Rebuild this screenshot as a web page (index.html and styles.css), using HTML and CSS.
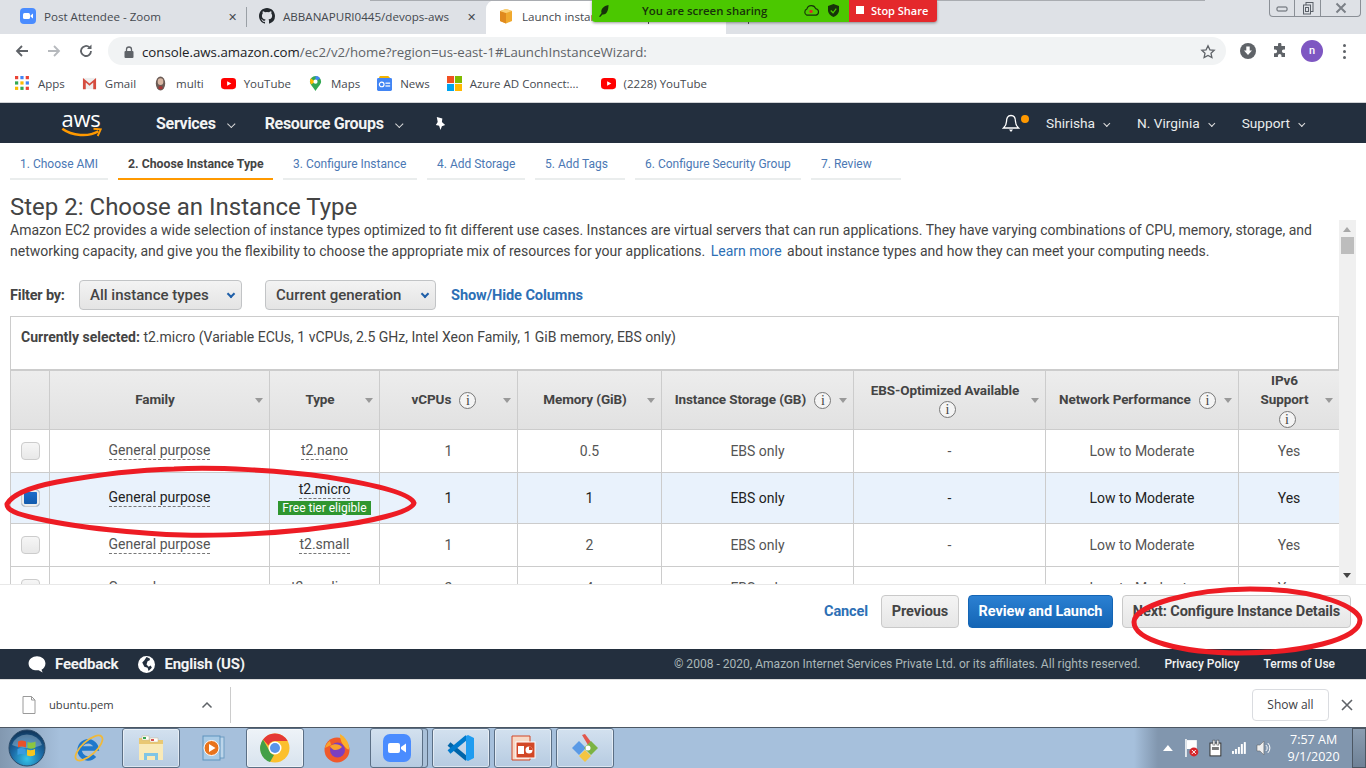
FILE: index.html
```html
<!DOCTYPE html>
<html lang="en">
<head>
    <meta charset="UTF-8">
    <meta name="viewport" content="width=device-width, initial-scale=1.0">
    <title>Launch instance wizard</title>
    <link rel="stylesheet" href="styles.css">
</head>
<body>
    <!-- Browser tabs -->
    <div class="tabstrip">
        <div class="tab">
            <svg class="tab-icon" viewBox="0 0 16 16"><rect width="16" height="16" rx="4" fill="#4a8cff"/><rect x="3" y="5" width="7" height="6" rx="1.5" fill="#fff"/><path d="M10.5 7.5 13 5.5v5l-2.500-2z" fill="#fff"/></svg>
            <span class="tab-title">Post Attendee - Zoom</span>
            <span class="tab-close">✕</span>
        </div>
        <div class="tab tab-sep">
            <svg class="tab-icon" viewBox="0 0 16 16"><path fill="#24292e" d="M8 0C3.580 0 0 3.580 0 8c0 3.540 2.290 6.530 5.470 7.590.4.070.55-.17.55-.38v-1.340c-2.230.49-2.690-1.070-2.690-1.070-.36-.92-.89-1.170-.89-1.170-.73-.5.050-.49.050-.49.800.060 1.230.83 1.230.83.710 1.220 1.870.87 2.330.66.070-.52.280-.87.510-1.070-1.780-.2-3.640-.89-3.640-3.950 0-.87.310-1.590.82-2.150-.08-.2-.36-1.020.08-2.120 0 0 .67-.21 2.200.82a7.600 7.600 0 0 1 4 0c1.530-1.040 2.200-.82 2.200-.82.44 1.100.16 1.920.08 2.120.51.560.82 1.270.82 2.150 0 3.070-1.870 3.750-3.650 3.950.29.250.54.730.54 1.480v2.200c0 .210.15.460.55.380A8 8 0 0 0 16 8c0-4.420-3.580-8-8-8z"/></svg>
            <span class="tab-title">ABBANAPURI0445/devops-aws</span>
            <span class="tab-close tab-close-2">✕</span>
        </div>
        <div class="tab tab-active">
            <svg class="tab-icon" viewBox="0 0 16 16"><path d="M8 1 14 3v10l-6 2.500L2 13V3z" fill="#f0a92e"/><path d="M8 5v10.500L2 13V3z" fill="#e08a1e"/><path d="M8 1 14 3 8 5 2 3z" fill="#fbd27a"/></svg>
            <span class="tab-title">Launch instan</span>
            <i class="tick tick-a"></i>
        </div>
        <i class="tick tick-b"></i>
        <i class="strip-shadow"></i>
        <div class="win-controls">
            <span class="win-btn win-min"><svg viewBox="0 0 14 14" width="14" height="14"><rect x="2" y="6" width="10" height="4" rx="1" fill="none" stroke="#5a6068"/></svg></span>
            <span class="win-btn"><svg viewBox="0 0 14 14" width="14" height="14"><rect x="5" y="1.500" width="7" height="9" fill="none" stroke="#5a6068"/><rect x="2.500" y="4" width="7" height="9" fill="#dee1e6" stroke="#5a6068"/><rect x="4.500" y="6.500" width="3" height="4" fill="none" stroke="#5a6068"/></svg></span>
            <span class="win-btn win-x"><svg viewBox="0 0 14 14" width="14" height="14"><path d="M2.500 2.500l9 9M11.500 2.500l-9 9" stroke="#7b8087" stroke-width="2" fill="none"/></svg></span>
        </div>
    </div>

    <!-- Address bar -->
    <div class="toolbar">
        <svg class="nav-icon" viewBox="0 0 16 16"><path d="M14 8H3M8 3 3 8l5 5" stroke="#5f6368" stroke-width="1.800" fill="none"/></svg>
        <svg class="nav-icon" viewBox="0 0 16 16"><path d="M2 8h11M8 3l5 5-5 5" stroke="#b6b9bd" stroke-width="1.800" fill="none"/></svg>
        <svg class="nav-icon" viewBox="0 0 16 16"><path d="M13 8a5 5 0 1 1-1.500-3.600" stroke="#5f6368" stroke-width="1.800" fill="none"/><path d="M13.500 1.500v4.500H9z" fill="#5f6368"/></svg>
        <div class="omnibox">
            <svg class="lock" viewBox="0 0 10 12"><rect x="0.500" y="5" width="9" height="7" rx="1" fill="#5f6368"/><path d="M2.500 5V3.500a2.500 2.500 0 0 1 5 0V5" stroke="#5f6368" stroke-width="1.300" fill="none"/></svg>
            <span class="url"><b class="url-host">console.aws.amazon.com</b>/ec2/v2/home?region=us-east-1#LaunchInstanceWizard:</span>
            <svg class="star" viewBox="0 0 16 16"><path d="M8 1.800l1.900 4 4.300.5-3.200 3 .9 4.300L8 11.400l-3.900 2.200.9-4.300-3.200-3 4.300-.5z" fill="none" stroke="#5f6368" stroke-width="1.300"/></svg>
        </div>
        <svg class="tool-icon" viewBox="0 0 16 16"><circle cx="8" cy="8" r="8" fill="#5f6368"/><path d="M6.300 3.500h3.400v4h2.300L8 12 4 7.500h2.300z" fill="#fff"/></svg>
        <svg class="tool-icon" viewBox="0 0 16 16"><path d="M6 1.500a1.700 1.700 0 0 1 3.400 0V3H13v3.500h-1.300a1.800 1.800 0 0 0 0 3.600H13V14H9.500v-1.200a1.800 1.800 0 0 0-3.600 0V14H2v-3.800h1.300a1.800 1.800 0 0 0 0-3.700H2V3h4z" fill="#5f6368"/></svg>
        <span class="avatar">n</span>
        <span class="kebab"><i></i><i></i><i></i></span>
    </div>

    <!-- Bookmarks -->
    <div class="bookmarks">
        <span class="bookmark">
            <svg class="bm-icon" viewBox="0 0 14 14"><rect width="3" height="3" fill="#ea4335"/><rect x="5" width="3" height="3" fill="#4285f4"/><rect x="10" width="3" height="3" fill="#ea4335"/><rect y="5" width="3" height="3" fill="#34a853"/><rect x="5" y="5" width="3" height="3" fill="#fbbc05"/><rect x="10" y="5" width="3" height="3" fill="#4285f4"/><rect y="10" width="3" height="3" fill="#fbbc05"/><rect x="5" y="10" width="3" height="3" fill="#34a853"/><rect x="10" y="10" width="3" height="3" fill="#ea4335"/></svg>Apps</span>
        <span class="bookmark">
            <svg class="bm-icon" viewBox="0 0 16 14"><path d="M1 1h14v12H1z" fill="#eee"/><path d="M1 13V1l7 6 7-6v12h-3V6L8 9.500 4 6v7z" fill="#d54c3f"/></svg>Gmail</span>
        <span class="bookmark">
            <svg class="bm-icon" viewBox="0 0 14 16"><ellipse cx="7" cy="8" rx="5" ry="7.500" fill="#6b5b55"/><ellipse cx="7" cy="6" rx="3" ry="3.500" fill="#d9b8a4"/><rect x="5" y="11" width="4" height="3" fill="#a33"/></svg>multi</span>
        <span class="bookmark">
            <svg class="bm-icon" viewBox="0 0 16 14"><rect y="1" width="16" height="12" rx="3.500" fill="#f00"/><path d="M6.500 4.500v5L11 7z" fill="#fff"/></svg>YouTube</span>
        <span class="bookmark">
            <svg class="bm-icon" viewBox="0 0 12 16"><path d="M6 0a6 6 0 0 1 6 6c0 3-4 6-6 10-2-4-6-7-6-10a6 6 0 0 1 6-6z" fill="#34a853"/><path d="M1 2.500 6 6 1.300 9A6 6 0 0 1 1 2.500z" fill="#fbbc05"/><path d="M6 0a6 6 0 0 1 5 2.500L6 6z" fill="#4285f4"/><circle cx="6" cy="6" r="2.200" fill="#fff"/></svg>Maps</span>
        <span class="bookmark">
            <svg class="bm-icon" viewBox="0 0 16 16"><rect y="2" width="16" height="14" rx="1.500" fill="#4285f4"/><path d="M3 0h9l2 2H2z" fill="#f4b400"/><rect x="9" y="7" width="5" height="1.300" fill="#fff"/><rect x="9" y="10" width="5" height="1.300" fill="#fff"/><circle cx="5" cy="9" r="2.500" fill="none" stroke="#fff" stroke-width="1.200"/></svg>News</span>
        <span class="bookmark">
            <svg class="bm-icon" viewBox="0 0 16 16"><rect width="7.500" height="7.500" fill="#f25022"/><rect x="8.500" width="7.500" height="7.500" fill="#7fba00"/><rect y="8.500" width="7.500" height="7.500" fill="#00a4ef"/><rect x="8.500" y="8.500" width="7.500" height="7.500" fill="#ffb900"/></svg>Azure AD Connect:...</span>
        <span class="bookmark bm-last">
            <svg class="bm-icon" viewBox="0 0 16 14"><rect y="1" width="16" height="12" rx="3.500" fill="#f00"/><path d="M6.500 4.500v5L11 7z" fill="#fff"/></svg>(2228) YouTube</span>
    </div>

    <!-- AWS console nav -->
    <nav class="aws-nav">
        <div class="aws-logo">
            <span class="aws-word">aws</span>
            <svg class="aws-smile" viewBox="0 0 34 10"><path d="M1 1.500c8 6 22 7 30 2" stroke="#f90" stroke-width="2" fill="none"/><path d="M27 1.500l6 .5-2.500 5.500" fill="none" stroke="#f90" stroke-width="1.600"/></svg>
        </div>
        <span class="nav-main nav-services">Services<i class="chev"></i></span>
        <span class="nav-main nav-groups">Resource Groups<i class="chev"></i></span>
        <svg class="pin" viewBox="0 0 14 16"><path d="M3 1l6 1.500-.5 4 3.500 3-3.500 1.500L7 15l-1.500-4.500L2 9.500l2-3z" fill="#fff"/></svg>
        <div class="nav-right">
            <span class="bell">
                <svg viewBox="0 0 18 20" width="18" height="20"><path d="M9 2.500c3.500 0 4.500 3 4.500 6 0 3.500 1.500 5 3 6.500h-15c1.500-1.500 3-3 3-6.500 0-3 1-6 4.500-6z" fill="none" stroke="#fff" stroke-width="1.300"/><path d="M7 16.500h4l-2 2.500z" fill="#fff"/></svg>
                <i class="bell-dot"></i>
            </span>
            <span class="nav-item">Shirisha<i class="chev"></i></span>
            <span class="nav-item">N. Virginia<i class="chev"></i></span>
            <span class="nav-item">Support<i class="chev"></i></span>
        </div>
    </nav>

    <!-- Wizard -->
    <main class="wizard">
        <ul class="steps">
            <li class="step step-1">1. Choose AMI</li>
            <li class="step step-2 current">2. Choose Instance Type</li>
            <li class="step step-3">3. Configure Instance</li>
            <li class="step step-4">4. Add Storage</li>
            <li class="step step-5">5. Add Tags</li>
            <li class="step step-6">6. Configure Security Group</li>
            <li class="step step-7">7. Review</li>
        </ul>

        <div class="scroller">
            <div class="scroll-content">
                <h1>Step 2: Choose an Instance Type</h1>
                <p class="intro">Amazon EC2 provides a wide selection of instance types optimized to fit different use cases. Instances are virtual servers that can run applications. They have varying combinations of CPU, memory, storage, and networking capacity, and give you the flexibility to choose the appropriate mix of resources for your applications. <a class="learn">Learn more</a> about instance types and how they can meet your computing needs.</p>

                <div class="filters">
                    <b class="filter-label">Filter by:</b>
                    <span class="select select-types">All instance types<i class="select-arrow"></i></span>
                    <span class="select select-gen">Current generation<i class="select-arrow"></i></span>
                    <a class="show-hide">Show/Hide Columns</a>
                </div>

                <div class="selected-box"><b>Currently selected:</b> t2.micro (Variable ECUs, 1 vCPUs, 2.5 GHz, Intel Xeon Family, 1 GiB memory, EBS only)</div>

                <table class="types">
                    <colgroup>
                        <col class="c-check"><col class="c-family"><col class="c-type"><col class="c-vcpu"><col class="c-mem"><col class="c-store"><col class="c-ebs"><col class="c-net"><col class="c-ipv6">
                    </colgroup>
                    <thead>
                        <tr>
                            <th></th>
                            <th><span class="th-text">Family</span><i class="sort"></i></th>
                            <th><span class="th-text">Type</span><i class="sort"></i></th>
                            <th><span class="th-text">vCPUs <i class="info">i</i></span><i class="sort"></i></th>
                            <th><span class="th-text">Memory (GiB)</span><i class="sort"></i></th>
                            <th><span class="th-text">Instance Storage (GB) <i class="info">i</i></span><i class="sort"></i></th>
                            <th><span class="th-text">EBS-Optimized Available<br><i class="info">i</i></span><i class="sort"></i></th>
                            <th><span class="th-text">Network Performance <i class="info">i</i></span><i class="sort"></i></th>
                            <th><span class="th-text">IPv6<br>Support<br><i class="info">i</i></span><i class="sort"></i></th>
                        </tr>
                    </thead>
                    <tbody>
                        <tr class="row">
                            <td><span class="check"></span></td>
                            <td><span class="dashed">General purpose</span></td>
                            <td><span class="dashed">t2.nano</span></td>
                            <td>1</td><td>0.5</td><td>EBS only</td><td>-</td><td>Low to Moderate</td><td>Yes</td>
                        </tr>
                        <tr class="row row-selected">
                            <td><span class="check checked"></span></td>
                            <td><span class="dashed">General purpose</span></td>
                            <td><span class="dashed">t2.micro</span><span class="free-tier">Free tier eligible</span></td>
                            <td>1</td><td>1</td><td>EBS only</td><td>-</td><td>Low to Moderate</td><td>Yes</td>
                        </tr>
                        <tr class="row">
                            <td><span class="check"></span></td>
                            <td><span class="dashed">General purpose</span></td>
                            <td><span class="dashed">t2.small</span></td>
                            <td>1</td><td>2</td><td>EBS only</td><td>-</td><td>Low to Moderate</td><td>Yes</td>
                        </tr>
                        <tr class="row">
                            <td><span class="check"></span></td>
                            <td><span class="dashed">General purpose</span></td>
                            <td><span class="dashed">t2.medium</span></td>
                            <td>2</td><td>4</td><td>EBS only</td><td>-</td><td>Low to Moderate</td><td>Yes</td>
                        </tr>
                    </tbody>
                </table>
            </div>
            <div class="scrollbar">
                <i class="sb-up"></i>
                <i class="sb-thumb"></i>
                <i class="sb-down"></i>
            </div>
        </div>

        <div class="actions">
            <a class="cancel">Cancel</a>
            <span class="btn btn-prev">Previous</span>
            <span class="btn btn-primary">Review and Launch</span>
            <span class="btn btn-next">Next: Configure Instance Details</span>
        </div>
    </main>

    <footer class="aws-footer">
        <span class="fb-item">
            <svg viewBox="0 0 16 16" width="18" height="18"><path d="M8 1c4 0 7.500 2.500 7.500 6.500 0 2.500-1.500 4.500-3.500 5.500l1 2.500-3.500-2c-.5.100-1 .1-1.500.1C4 13.600.5 11.500.5 7.500S4 1 8 1z" fill="#fff"/></svg>
            Feedback</span>
        <span class="fb-item fb-lang">
            <svg viewBox="0 0 16 16" width="17" height="17"><circle cx="8" cy="8" r="8" fill="#fff"/><path d="M8 1c2 1 4 1 3 3L9 5 8 8l2 2 2-1 1 2-3 3-1-3-3-1-2-4 2-2z" fill="#232f3e"/></svg>
            English (US)</span>
        <span class="copyright">© 2008 - 2020, Amazon Internet Services Private Ltd. or its affiliates. All rights reserved.</span>
        <span class="foot-link">Privacy Policy</span>
        <span class="foot-link">Terms of Use</span>
    </footer>

    <!-- Chrome downloads shelf -->
    <div class="shelf">
        <div class="download">
            <svg viewBox="0 0 14 18" width="14" height="18"><path d="M1 .5h8.500L13 4v13.500H1z" fill="#fff" stroke="#9a9a9a"/><path d="M9.500.5V4H13" fill="none" stroke="#9a9a9a"/></svg>
            <span class="file-name">ubuntu.pem</span>
            <svg class="shelf-chev" viewBox="0 0 12 8" width="12" height="8"><path d="M1.500 6.500 6 2l4.500 4.500" fill="none" stroke="#5f6368" stroke-width="1.500"/></svg>
        </div>
        <span class="show-all">Show all</span>
        <svg class="shelf-x" viewBox="0 0 12 12" width="12" height="12"><path d="M1 1l10 10M11 1 1 11" stroke="#5f6368" stroke-width="1.600"/></svg>
    </div>

    <!-- Windows taskbar -->
    <div class="taskbar">
        <span class="start">
            <svg viewBox="0 0 38 38" width="38" height="38">
                <defs>
                    <radialGradient id="orb" cx="50%" cy="80%" r="75%"><stop offset="0" stop-color="#35c3e8"/><stop offset=".55" stop-color="#1c6ca8"/><stop offset="1" stop-color="#123a60"/></radialGradient>
                </defs>
                <circle cx="19" cy="19" r="18" fill="url(#orb)" stroke="#2b4a68"/>
                <path d="M4 16a15.500 14 0 0 1 30 0c-9 4-21 4-30 0z" fill="#cfe3f2" opacity=".35"/>
                <path d="M10 12.500c3-1.500 5-1 8 0v6c-3-1-5-1.500-8 0z" fill="#e8522a"/>
                <path d="M19.500 13c3 1 5 1 8-.5v6c-3 1.500-5 1.500-8 .5z" fill="#8cc63f"/>
                <path d="M9.500 20c3-1.500 5-1 8 0v6c-3-1-5-1.500-8 0z" fill="#3a9be0"/>
                <path d="M19 20.500c3 1 5 1 8-.5v6c-3 1.500-5 1.500-8 .5z" fill="#f7c51e"/>
            </svg>
        </span>
        <span class="task task-plain">
            <svg viewBox="0 0 34 34" width="34" height="34"><path d="M7 15.500h15.500a8.500 8.500 0 1 0-2 7" transform="translate(2 2)" fill="none" stroke="#1f78cc" stroke-width="4.500"/><ellipse cx="17" cy="17" rx="17" ry="7" transform="rotate(-42 17 17)" fill="none" stroke="#f0b93a" stroke-width="1.800"/></svg>
        </span>
        <span class="task task-open">
            <svg viewBox="0 0 30 30" width="30" height="30"><path d="M3 5h9l2 2h13v20H3z" fill="#e9c873"/><path d="M3 11h24v16H3z" fill="#f9eab8"/><rect x="6" y="3" width="7" height="4" fill="#fff" stroke="#c9b98a" stroke-width=".5"/><rect x="7" y="4" width="3" height="2" fill="#3aa655"/><rect x="14" y="5" width="8" height="4" fill="#fff" stroke="#c9b98a" stroke-width=".5"/><rect x="15" y="6" width="3" height="2" fill="#d9534f"/><path d="M8 20h14v7h-3v-4h-8v4H8z" fill="#7fc5e6"/></svg>
        </span>
        <span class="task task-plain">
            <svg viewBox="0 0 30 30" width="30" height="30"><rect x="12" y="4" width="14" height="21" fill="#bcd5ea" stroke="#6e9cc2"/><rect x="5" y="3" width="17" height="24" fill="#a9cbe6" stroke="#5f93bd"/><circle cx="13.500" cy="15" r="7.500" fill="#e8731c" stroke="#fff"/><path d="M11 11v8l6.500-4z" fill="#fff"/></svg>
        </span>
        <span class="task task-open task-active">
            <svg viewBox="0 0 30 30" width="30" height="30"><circle cx="15" cy="15" r="14.500" fill="#fbc02d"/><path d="M15 .5A14.500 14.500 0 0 1 27.600 8H15a7 7 0 0 0-6.500 4.500L3 6.500A14.500 14.500 0 0 1 15 .5z" fill="#e53935"/><path d="M3 6.500l6 10.500a7 7 0 0 0 5 4.900L10 29A14.500 14.500 0 0 1 3 6.500z" fill="#43a047"/><circle cx="15" cy="15" r="6.500" fill="#fff"/><circle cx="15" cy="15" r="5" fill="#5a95e8"/></svg>
        </span>
        <span class="task task-plain">
            <svg viewBox="0 0 30 30" width="30" height="30"><circle cx="15" cy="17" r="12.500" fill="#f0592b"/><path d="M18 1c5 3 9 8 9 14 0 3-2 1-4-1-3-3-5-7-5-13z" fill="#fbb12b"/><path d="M3 15c1-4 3-6 5-7l1 4z" fill="#f9a12b"/><circle cx="15.500" cy="17" r="7.500" fill="#7b3fbf"/><path d="M8 13c4-3 10-2 12 1-2 2-4 3-7 3-2 0-4-2-5-4z" fill="#f9a12b"/></svg>
        </span>
        <span class="task task-open task-stack">
            <svg viewBox="0 0 30 30" width="30" height="30"><rect x="1" y="1" width="28" height="28" rx="7" fill="#4a8cff"/><rect x="6" y="10" width="12" height="10" rx="2" fill="#fff"/><path d="M19 14l5-3.500v9L19 16z" fill="#fff"/></svg>
        </span>
        <span class="task task-open">
            <svg viewBox="0 0 30 30" width="30" height="30"><path d="M3 11 21 26" stroke="#0065a9" stroke-width="4.500" fill="none"/><path d="M3 19 21 4" stroke="#007acc" stroke-width="4.500" fill="none"/><path d="M20 3l2-1 6 3v20l-6 3-2-1z" fill="#1f9cf0"/></svg>
        </span>
        <span class="task task-open">
            <svg viewBox="0 0 30 30" width="30" height="30"><path d="M4 3h18v24H4z" fill="#f7d9c6" stroke="#d24726"/><rect x="8" y="9" width="19" height="16" fill="#d24726" stroke="#fff"/><rect x="10" y="13" width="6" height="8" fill="#fff"/><circle cx="21" cy="17" r="3.500" fill="#fff"/><path d="M21 17v-3.500a3.500 3.500 0 0 1 3.500 3.500z" fill="#d24726"/></svg>
        </span>
        <span class="task task-open">
            <svg viewBox="0 0 30 30" width="30" height="30"><path d="M12 2l3-1 6 8-3 3z" fill="#e2574c"/><path d="M9 8l7 7-7 7-7-7z" fill="#5a9ae6"/><path d="M21 8l7 7-7 7-7-7z" fill="#7cb342"/><path d="M15 17l6 6-6 6-6-6z" fill="#f4c542"/><circle cx="18" cy="15" r="2.500" fill="#fff"/></svg>
        </span>
        <div class="tray">
            <svg class="tray-up" viewBox="0 0 10 6" width="10" height="6"><path d="M5 0l5 6H0z" fill="#fff"/></svg>
            <svg viewBox="0 0 16 20" width="16" height="20"><path d="M2 1v18" stroke="#fff" stroke-width="1.500"/><path d="M3 2h10v9H3z" fill="#fff"/><circle cx="10" cy="14" r="4.500" fill="#d6262c"/><path d="M8 12l4 4M12 12l-4 4" stroke="#fff"/></svg>
            <svg viewBox="0 0 14 18" width="14" height="18"><rect x="1" y="4" width="11" height="13" fill="#fff" stroke="#333"/><rect x="4" y="1" width="2" height="5" fill="#fff" stroke="#333" stroke-width=".5"/><rect x="8" y="1" width="2" height="5" fill="#fff" stroke="#333" stroke-width=".5"/><rect x="3" y="8" width="7" height="3" fill="#777"/></svg>
            <svg viewBox="0 0 16 14" width="16" height="14"><rect x="1" y="10" width="2" height="3" fill="#fff"/><rect x="4" y="8" width="2" height="5" fill="#fff"/><rect x="7" y="6" width="2" height="7" fill="#fff"/><rect x="10" y="3" width="2" height="10" fill="#fff"/><rect x="13" y="1" width="2" height="12" fill="#fff"/></svg>
            <svg viewBox="0 0 16 16" width="16" height="16"><path d="M1 5h3l4-4v14l-4-4H1z" fill="#eee" stroke="#555" stroke-width=".5"/><path d="M10 5a4 4 0 0 1 0 6M12 3a7 7 0 0 1 0 10" fill="none" stroke="#fff"/></svg>
            <div class="clock"><span>7:57 AM</span><span>9/1/2020</span></div>
            <i class="show-desktop"></i>
        </div>
    </div>

    <!-- Zoom share bar, floats over the tabs -->
    <div class="zoom-bar">
        <div class="zoom-green">
            <svg viewBox="0 0 10 12" width="10" height="12"><path d="M9.500 0C4.500 1 1.500 4 2.500 8L0 11.500l1.200.5L3.500 9.500C8 10 9.500 5 9.500 0z" fill="#17330a"/></svg>
            <span class="zoom-text">You are screen sharing</span>
            <svg class="zoom-cloud" viewBox="0 0 18 14" width="17" height="13"><path d="M4 12a3.500 3.500 0 0 1 0-6.500 5 5 0 0 1 9.500-.5A3.600 3.600 0 0 1 14 12z" fill="none" stroke="#17330a" stroke-width="1.200"/><circle cx="8.500" cy="8" r="1.800" fill="#e3262b"/></svg>
            <svg viewBox="0 0 12 14" width="11" height="13"><path d="M6 0l6 2v5c0 3-3 6-6 7-3-1-6-4-6-7V2z" fill="#17330a"/><path d="M3 7l2.500 2.500L9 5" fill="none" stroke="#4bc800" stroke-width="1.400"/></svg>
        </div>
        <div class="zoom-stop"><i class="stop-sq"></i>Stop Share</div>
    </div>

    <!-- Red hand drawn circles on top of the screenshot -->
    <svg class="scribble" viewBox="0 0 1366 768" width="1366" height="768">
        <path d="M7 504C12 495 26 488 57 482C90 476 130 470 174 469C215 467 280 470 327 477C365 483 410 492 414 503C412 512 370 522 327 527C285 533 225 536 183 535C140 534 75 527 44 520C25 516 6 512 7 504Z" fill="none" stroke="#ed1c24" stroke-width="5"/>
        <path d="M1134 622C1134 606 1190 589 1250 589C1320 589 1360 608 1360 620C1360 640 1300 653 1240 653C1180 653 1134 640 1134 622Z" fill="none" stroke="#ed1c24" stroke-width="5"/>
    </svg>
</body>
</html>
```

FILE: styles.css
```css
* {
    box-sizing: border-box;
}

body {
    margin: 0;
    width: 1366px;
    height: 768px;
    overflow: hidden;
    display: flex;
    flex-direction: column;
    position: relative;
    font-family: 'Roboto', 'Liberation Sans', sans-serif;
    background-color: #fff;
    color: #444;
}

/* Browser chrome */
.tabstrip {
    height: 34px;
    flex: none;
    display: flex;
    align-items: stretch;
    background-color: #dee1e6;
    font-family: 'Open Sans', 'Liberation Sans', sans-serif;
    font-size: 11.600px;
    color: #45494f;
    position: relative;
}

.tab {
    width: 243px;
    display: flex;
    align-items: center;
    padding: 0 0 2px 20px;
    position: relative;
}

.tab-sep {
    padding-left: 16px;
}

.tab-sep::before {
    content: "";
    position: absolute;
    left: 3px;
    top: 7px;
    height: 20px;
    width: 1px;
    background-color: #9aa0a6;
}

.tab-active {
    width: 240px;
    background-color: #fff;
    border-radius: 9px 9px 0 0;
    padding-left: 12px;
}

.tick {
    position: absolute;
    top: 22px;
    width: 1px;
    height: 2px;
    background-color: #555;
}

.tick-a {
    left: 162px;
}

.tick-b {
    left: 748px;
}

.strip-shadow {
    position: absolute;
    left: 370px;
    top: 0;
    width: 835px;
    height: 1px;
    background-color: #a9acb1;
}

.tab-icon {
    width: 16px;
    height: 16px;
    flex: none;
    margin-right: 8px;
}

.tab-title {
    white-space: nowrap;
}

.tab-close {
    position: absolute;
    right: 6px;
    font-size: 11px;
    color: #45494f;
}

.tab-close-2 {
    right: 10px;
}

.win-controls {
    position: absolute;
    right: 5px;
    top: 0;
    width: 92px;
    height: 17px;
    display: flex;
    border: 1px solid #8a8f96;
    border-top: none;
    border-radius: 0 0 4px 4px;
}

.win-btn {
    flex: 1;
    display: flex;
    align-items: center;
    justify-content: center;
    border-left: 1px solid #8a8f96;
}

.win-min {
    border-left: none;
    flex: none;
    width: 24px;
}

.win-x {
    flex: none;
    width: 40px;
}

.toolbar {
    height: 34px;
    flex: none;
    display: flex;
    align-items: center;
    padding-left: 14px;
    background-color: #fff;
}

.nav-icon {
    width: 16px;
    height: 16px;
    margin-right: 16px;
    flex: none;
}

.omnibox {
    width: 1118px;
    height: 28px;
    margin-left: -2px;
    border-radius: 14px;
    background-color: #f1f3f4;
    display: flex;
    align-items: center;
    padding: 1px 10px 0 16px;
    font-family: 'Open Sans', 'Liberation Sans', sans-serif;
    font-size: 13.250px;
    color: #5f6368;
}

.lock {
    width: 10px;
    height: 12px;
    margin-right: 8px;
}

.url {
    flex: 1;
    white-space: nowrap;
}

.url-host {
    font-weight: normal;
    color: #202124;
}

.star {
    width: 16px;
    height: 16px;
}

.tool-icon {
    width: 16px;
    height: 16px;
    margin-left: 14px;
}

.tool-icon + .tool-icon {
    margin-left: 16px;
}

.avatar {
    width: 22px;
    height: 22px;
    margin-left: 13px;
    border-radius: 50%;
    background-color: #7e57c2;
    color: #fff;
    font-size: 11px;
    font-weight: 500;
    text-align: center;
    line-height: 21px;
}

.kebab {
    margin-left: 20px;
    display: flex;
    flex-direction: column;
    gap: 3px;
}

.kebab i {
    width: 3px;
    height: 3px;
    border-radius: 50%;
    background-color: #5f6368;
}

.bookmarks {
    height: 35px;
    flex: none;
    display: flex;
    align-items: center;
    padding: 0 0 3px 15px;
    gap: 17px;
    background-color: #fff;
    border-bottom: 1px solid #d0d2d5;
    font-family: 'Open Sans', 'Liberation Sans', sans-serif;
    font-size: 11.500px;
    color: #45494f;
}

.bookmark {
    display: flex;
    align-items: center;
    white-space: nowrap;
}

.bm-last {
    margin-left: 5px;
}

.bm-icon {
    width: 15px;
    height: 15px;
    margin-right: 8px;
    flex: none;
}

/* AWS nav */
.aws-nav {
    height: 40px;
    flex: none;
    display: flex;
    align-items: center;
    background-color: #232f3e;
    color: #fff;
}

.aws-logo {
    width: 42px;
    margin-left: 60px;
    margin-right: 54px;
    display: flex;
    flex-direction: column;
    align-items: center;
    height: 32px;
}

.aws-word {
    font-family: 'Open Sans', 'Liberation Sans', sans-serif;
    font-size: 22px;
    line-height: 22px;
    letter-spacing: -0.3px;
}

.aws-smile {
    width: 41px;
    height: 12px;
    flex: none;
    margin-top: -2px;
}

.nav-main {
    font-size: 16px;
    font-weight: 700;
    letter-spacing: -0.3px;
    white-space: nowrap;
    color: #f2f3f3;
}

.nav-services {
    margin-right: 29px;
}

.nav-groups {
    margin-right: 31px;
}

.chev {
    display: inline-block;
    width: 6px;
    height: 6px;
    margin-left: 13px;
    border-right: 1.5px solid #ddd;
    border-bottom: 1.5px solid #ddd;
    transform: rotate(45deg) translate(-2px, -1px);
}

.nav-services .chev {
    margin-right: 1px;
}

.pin {
    width: 13px;
    height: 15px;
}

.nav-right {
    margin-left: auto;
    display: flex;
    align-items: center;
    padding-right: 61px;
    font-size: 13.700px;
    color: #eaeded;
}

.bell {
    position: relative;
    display: flex;
    margin-right: 26px;
}

.bell-dot {
    position: absolute;
    right: -9px;
    top: 2px;
    width: 8px;
    height: 8px;
    border-radius: 50%;
    background-color: #f90;
}

.nav-item {
    margin-right: 27px;
    white-space: nowrap;
}

.nav-item:last-child {
    margin-right: 0;
}

.nav-item .chev {
    width: 5px;
    height: 5px;
    margin-left: 10px;
}

/* Wizard */
.wizard {
    flex: none;
    height: 506px;
    display: flex;
    flex-direction: column;
    background-color: #fff;
}

.steps {
    list-style: none;
    margin: 0;
    padding: 0 0 0 10px;
    height: 37px;
    flex: none;
    display: flex;
    gap: 10px;
}

.step {
    border-bottom: 2px solid #eaeded;
    font-size: 12px;
    color: #4b78b4;
    text-align: left;
    padding: 14px 0 0 10px;
    white-space: nowrap;
}

.step-1 { width: 98px; }
.step-2 { width: 155px; }
.step-3 { width: 134px; }
.step-4 { width: 98px; }
.step-5 { width: 90px; }
.step-6 { width: 166px; }
.step-7 { width: 90px; }

.current {
    border-bottom-color: #f90;
    color: #444;
    font-size: 12.300px;
    font-weight: 700;
}

.scroller {
    flex: none;
    height: 404px;
    position: relative;
    overflow: hidden;
}

.scroll-content {
    padding: 0 0 0 10px;
    width: 1339px;
}

h1 {
    margin: 14px 0 0;
    font-size: 24px;
    font-weight: 400;
    line-height: 26px;
    color: #444;
}

.intro {
    margin: 0;
    width: 1320px;
    font-size: 14px;
    line-height: 21px;
    color: #444;
}

.learn,
.show-hide,
.cancel {
    color: #2d6fb5;
}

.learn {
    margin: 0 2px;
}

.filters {
    display: flex;
    align-items: center;
    height: 30px;
    margin-top: 18px;
}

.filter-label {
    font-size: 14.500px;
    font-weight: 700;
    letter-spacing: -0.2px;
    width: 69px;
}

.select {
    height: 30px;
    border: 1px solid #c2c4c6;
    border-radius: 4px;
    background: linear-gradient(#f3f3f3, #e4e4e4);
    font-size: 15px;
    font-weight: 500;
    color: #444;
    line-height: 29px;
    padding-left: 10px;
    position: relative;
    white-space: nowrap;
}

.select-types {
    width: 163px;
    margin-right: 23px;
}

.select-gen {
    width: 171px;
    margin-right: 15px;
}

.select-arrow {
    position: absolute;
    right: 7px;
    top: 10px;
    width: 6px;
    height: 6px;
    border-right: 2px solid #1f5fa8;
    border-bottom: 2px solid #1f5fa8;
    transform: rotate(45deg);
}

.show-hide {
    font-size: 14.600px;
    font-weight: 700;
    letter-spacing: -0.1px;
}

.selected-box {
    height: 53px;
    margin-top: 6px;
    padding: 12px 10px 0;
    border: 1px solid #ccc;
    border-bottom-width: 0;
    font-size: 14px;
    color: #444;
}

.types {
    width: 1329px;
    table-layout: fixed;
    border-collapse: collapse;
    border: 1px solid #ccc;
    font-size: 14px;
}

.c-check { width: 39px; }
.c-family { width: 220px; }
.c-type { width: 110px; }
.c-vcpu { width: 138px; }
.c-mem { width: 144px; }
.c-store { width: 192px; }
.c-ebs { width: 192px; }
.c-net { width: 193px; }
.c-ipv6 { width: 101px; }

thead tr {
    height: 58px;
    background: linear-gradient(#ededed, #e1e1e1);
}

th {
    border: 1px solid #ccc;
    border-top: 2px solid #ccc;
    border-bottom: 1px solid #ccc;
    padding: 0 14px 1px 5px;
    position: relative;
    font-size: 13.500px;
    font-weight: 700;
    letter-spacing: -0.1px;
    line-height: 19px;
    text-align: center;
    color: #444;
}

.sort {
    position: absolute;
    right: 6px;
    top: 27px;
    border-left: 4px solid transparent;
    border-right: 4px solid transparent;
    border-top: 5px solid #999;
}

.info {
    display: inline-block;
    width: 17px;
    height: 17px;
    margin: -3px 0 -3px 5px;
    border: 1px solid #777;
    border-radius: 50%;
    font-family: 'Liberation Serif', serif;
    font-size: 14px;
    font-weight: 400;
    font-style: normal;
    line-height: 15px;
    text-align: center;
    vertical-align: middle;
    background-color: #f4f4f4;
    color: #444;
}

td {
    border: 1px solid #ccc;
    text-align: center;
    padding: 0 0 1px;
    color: #555;
}

.row {
    height: 43px;
}

.row-selected {
    height: 51px;
    background-color: #e9f2fc;
}

.row-selected td {
    color: #222;
}

.dashed {
    border-bottom: 1px dashed #777;
    line-height: 17px;
    display: inline-block;
}

.check {
    display: block;
    width: 19px;
    height: 18px;
    margin: 0 auto 0 10px;
    border: 1px solid #ccc;
    border-radius: 4px;
    background: linear-gradient(#f6f6f6, #e8e8e8);
}

.checked {
    background: linear-gradient(#1e6fd0, #1058a8);
    box-shadow: inset 0 0 0 2px #ececec;
}

.free-tier {
    display: block;
    width: 93px;
    height: 14px;
    margin: 2px auto 0;
    background-color: #2f962f;
    color: #fff;
    font-size: 12px;
    line-height: 14px;
}

.scrollbar {
    position: absolute;
    left: 1339px;
    top: 40px;
    width: 17px;
    height: 364px;
    background-color: #f0f0f0;
}

.sb-up,
.sb-down {
    position: absolute;
    left: 4px;
    border-left: 4.500px solid transparent;
    border-right: 4.500px solid transparent;
}

.sb-up {
    top: 7px;
    border-bottom: 5px solid #a8a8a8;
}

.sb-down {
    bottom: 6px;
    border-top: 5px solid #444;
}

.sb-thumb {
    position: absolute;
    left: 2px;
    right: 2px;
    top: 17px;
    height: 17px;
    background-color: #bdbdbd;
}

.actions {
    flex: none;
    height: 65px;
    display: flex;
    align-items: flex-start;
    justify-content: flex-end;
    padding: 10px 15px 0 0;
    border-top: 1px solid #e8e8e8;
    font-size: 14.500px;
}

.cancel {
    font-weight: 700;
    letter-spacing: -0.1px;
    line-height: 33px;
    margin-right: 13px;
}

.btn {
    height: 33px;
    border: 1px solid #c9c9c9;
    border-radius: 4px;
    background: linear-gradient(#f4f4f4, #e6e6e6);
    font-weight: 700;
    letter-spacing: -0.1px;
    line-height: 31px;
    color: #444;
    text-align: center;
    margin-right: 9px;
    white-space: nowrap;
}

.btn-prev {
    width: 78px;
}

.btn-primary {
    width: 145px;
    border-color: #1465b5;
    background: linear-gradient(#2b80d2, #1465b5);
    color: #fff;
}

.btn-next {
    width: 229px;
    margin-right: 0;
}

/* Footer */
.aws-footer {
    height: 30px;
    flex: none;
    display: flex;
    align-items: center;
    background-color: #232f3e;
    color: #f2f3f3;
    padding: 0 31px 0 28px;
    font-size: 12px;
}

.fb-item {
    display: flex;
    align-items: center;
    gap: 9px;
    font-size: 15px;
    font-weight: 700;
    letter-spacing: -0.2px;
}

.fb-lang {
    margin-left: 20px;
}

.copyright {
    margin-left: auto;
    margin-right: 24px;
    font-size: 12.050px;
    color: #aab7b8;
}

.foot-link {
    font-weight: 500;
}

.foot-link:last-child {
    margin-left: 24px;
}

/* Downloads shelf */
.shelf {
    height: 48px;
    flex: none;
    display: flex;
    align-items: center;
    background-color: #fff;
    border-top: 1px solid #ddd;
    padding: 2px 13px 0 0;
    font-family: 'Open Sans', 'Liberation Sans', sans-serif;
    font-size: 12px;
    color: #3c4043;
}

.download {
    width: 231px;
    height: 36px;
    display: flex;
    align-items: center;
    padding-left: 22px;
    border-right: 1px solid #ccc;
}

.file-name {
    margin-left: 13px;
    flex: 1;
    font-size: 11.200px;
}

.shelf-chev {
    margin-right: 17px;
}

.show-all {
    margin-left: auto;
    width: 77px;
    height: 32px;
    border: 1px solid #dadce0;
    border-radius: 4px;
    line-height: 30px;
    text-align: center;
}

.shelf-x {
    margin-left: 12px;
}

/* Windows taskbar */
.taskbar {
    height: 41px;
    flex: none;
    display: flex;
    align-items: stretch;
    gap: 4px;
    background: linear-gradient(90deg, #8298b0, #a6c0dc 60px);
    border-top: 1px solid #4c5763;
    padding-left: 8px;
}

.start {
    width: 38px;
    display: flex;
    align-items: center;
    margin-right: 10px;
}

.task {
    width: 58px;
    display: flex;
    align-items: center;
    justify-content: center;
    border-radius: 3px;
}

.task-open {
    border: 1px solid #5b6f85;
    background: linear-gradient(#d3e1ef, #b6cbe1);
    box-shadow: inset 0 0 0 1px rgba(255, 255, 255, 0.5);
}

.task-active {
    background: linear-gradient(#eef3f8, #d8e3ee);
}

.task-stack {
    padding-right: 5px;
    box-shadow: inset -4px 0 0 #a9c0d8, inset -5px 0 0 #5b6f85;
}

.tray {
    margin-left: auto;
    width: 232px;
    display: flex;
    align-items: center;
    gap: 9px;
    padding-left: 29px;
    background: linear-gradient(90deg, #a6c0dc, #8196ae 24px);
    color: #fff;
}

.tray-up {
    margin-right: 2px;
}

.clock {
    width: 60px;
    margin-left: 3px;
    display: flex;
    flex-direction: column;
    align-items: center;
    font-family: 'Open Sans', 'Liberation Sans', sans-serif;
    font-size: 12.500px;
    line-height: 17px;
}

.show-desktop {
    width: 14px;
    align-self: stretch;
    margin-left: auto;
    border: 1px solid #4c5763;
    background: linear-gradient(#8b9db1, #6f8297);
}

/* Overlays */
.zoom-bar {
    position: absolute;
    left: 592px;
    top: 0;
    height: 22px;
    display: flex;
    font-family: 'Open Sans', 'Liberation Sans', sans-serif;
    font-size: 11.400px;
    font-weight: 600;
    box-shadow: 0 1px 3px rgba(0, 0, 0, 0.4);
    border-radius: 0 0 3px 3px;
}

.zoom-green {
    width: 257px;
    display: flex;
    align-items: center;
    padding: 0 0 1px 7px;
    background-color: #4bc800;
    color: #17330a;
    border-radius: 0 0 0 3px;
}

.zoom-text {
    margin-left: 33px;
    width: 161px;
}

.zoom-cloud {
    margin-right: 8px;
}

.zoom-stop {
    width: 88px;
    display: flex;
    align-items: center;
    padding: 0 0 2px 7px;
    gap: 7px;
    background-color: #e4282c;
    color: #fff;
    font-size: 11px;
    border-radius: 0 0 3px 0;
}

.stop-sq {
    width: 8px;
    height: 8px;
    background-color: #fff;
}

.scribble {
    position: absolute;
    left: 0;
    top: 0;
    pointer-events: none;
}
```
